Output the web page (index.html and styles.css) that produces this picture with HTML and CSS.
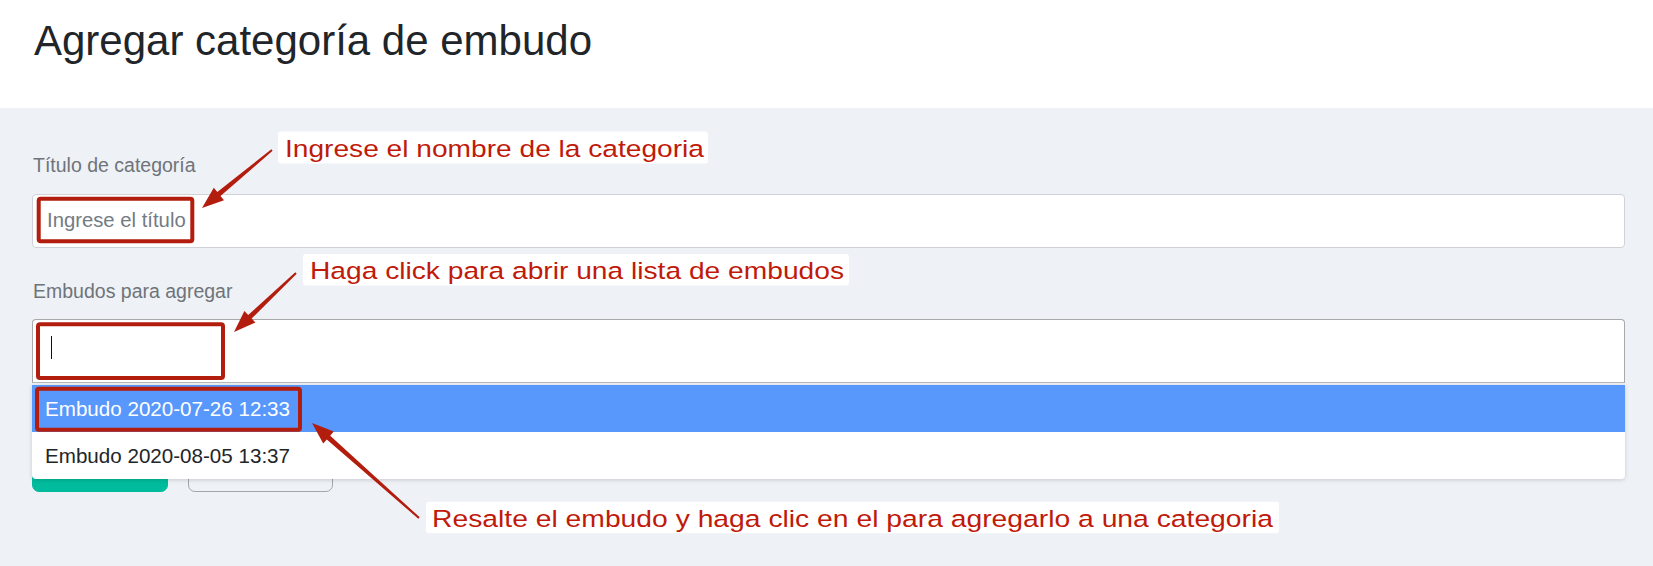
FILE: index.html
```html
<!DOCTYPE html>
<html lang="es">
<head>
<meta charset="utf-8">
<title>Agregar categoría de embudo</title>
<link rel="stylesheet" href="styles.css">
</head>
<body>
<header class="page-header">
  <h1 class="page-title">Agregar categoría de embudo</h1>
</header>
<main class="page-body">
  <form class="form">
    <div class="form-group">
      <label class="form-label">Título de categoría</label>
      <input class="form-input" type="text" placeholder="Ingrese el título">
    </div>
    <div class="form-group">
      <label class="form-label form-label-select">Embudos para agregar</label>
      <div class="select">
        <div class="select-box"><span class="select-caret"></span></div>
        <ul class="select-dropdown">
          <li class="select-option is-active">Embudo 2020-07-26 12:33</li>
          <li class="select-option">Embudo 2020-08-05 13:37</li>
        </ul>
      </div>
    </div>
    <div class="form-actions">
      <button type="button" class="btn btn-primary" aria-label="Guardar"></button>
      <button type="button" class="btn btn-outline" aria-label="Cancelar"></button>
    </div>
  </form>
</main>
<svg class="annotations" width="1653" height="566" viewBox="0 0 1653 566">
  <g class="mark-boxes" fill="none" stroke="#b31d0d" stroke-width="4">
    <rect x="38.7" y="198.7" width="153.6" height="42.6" rx="2"/>
    <rect x="38" y="324.3" width="185" height="53.7" rx="2"/>
    <rect x="37" y="388.7" width="263" height="41" rx="2"/>
  </g>
  <g class="arrows" fill="#b31d0d">
    <polygon points="272.6,150.8 220.5,195.9 224.0,200.2 202,208 213.8,187.8 217.3,192.1 271.4,149.2"/>
    <polygon points="296.7,273.7 251.6,318.6 255.4,322.6 234,332 244.4,311.0 248.2,315.0 295.3,272.3"/>
    <polygon points="418.3,518.7 326.8,439.5 323.2,443.6 312,423 333.8,431.6 330.2,435.7 419.7,517.3"/>
  </g>
  <g class="notes">
    <rect class="note-bg" x="278" y="131.5" width="430" height="32" rx="3"/>
    <text class="note-text" x="285" y="156.7" textLength="419" lengthAdjust="spacingAndGlyphs">Ingrese el nombre de la categoria</text>
    <rect class="note-bg" x="303" y="254" width="546" height="31.5" rx="3"/>
    <text class="note-text" x="310" y="279.3" textLength="534" lengthAdjust="spacingAndGlyphs">Haga click para abrir una lista de embudos</text>
    <rect class="note-bg" x="426" y="501.7" width="853" height="31.6" rx="3"/>
    <text class="note-text" x="432" y="526.7" textLength="841" lengthAdjust="spacingAndGlyphs">Resalte el embudo y haga clic en el para agregarlo a una categoria</text>
  </g>
</svg>
</body>
</html>
```
FILE: styles.css
```css
html {
  background: #eef1f6;
}

body {
  margin: 0;
  min-height: 566px;
  background: #eef1f6;
  font-family: "Liberation Sans", Arial, sans-serif;
  position: relative;
  overflow: hidden;
}

.page-header {
  background: #ffffff;
  height: 108px;
  box-sizing: border-box;
  padding: 16.5px 0 0 34px;
}

.page-title {
  margin: 0;
  font-size: 42px;
  line-height: 48px;
  font-weight: 400;
  color: #212529;
}

.page-body {
  padding: 45px 28px 0 32px;
}

.form {
  margin: 0;
}

.form-group {
  margin-bottom: 31px;
}

.form-group:last-of-type {
  margin-bottom: 0;
}

.form-label {
  display: block;
  font-size: 19.5px;
  line-height: 24px;
  color: #6f7479;
  margin: 0 0 16.5px 1px;
}

.form-label-select {
  margin-bottom: 16.8px;
}

.form-input {
  display: block;
  width: 100%;
  height: 54px;
  box-sizing: border-box;
  border: 1px solid #cfd2d6;
  border-radius: 4px;
  background: #ffffff;
  padding: 0 14px;
  font-family: "Liberation Sans", Arial, sans-serif;
  font-size: 20.3px;
  color: #333;
  outline: none;
}

.form-input::placeholder {
  color: #737b84;
  opacity: 1;
}

.select {
  position: relative;
}

.select-box {
  height: 64px;
  box-sizing: border-box;
  border: 1px solid #a9a9a9;
  border-bottom-color: #b8b8b8;
  border-radius: 4px 4px 0 0;
  background: #ffffff;
  padding: 16px 0 0 17.7px;
}

.select-caret {
  display: block;
  width: 1px;
  height: 23px;
  background: #111;
}

.select-dropdown {
  position: absolute;
  left: 0;
  right: 0;
  top: calc(100% + 1.6px);
  margin: 0;
  padding: 0;
  list-style: none;
  background: #ffffff;
  border-radius: 0 0 4px 4px;
  box-shadow: 0 1px 4px rgba(0, 0, 0, 0.16);
  z-index: 5;
  overflow: hidden;
}

.select-option {
  padding: 12px 13px;
  font-size: 20.6px;
  line-height: 23px;
  color: #222529;
}

.select-option.is-active {
  background: #5897fb;
  color: #ffffff;
}

.form-actions {
  display: flex;
  gap: 20px;
  margin-top: 62.7px;
}

.btn {
  height: 46px;
  border-radius: 7px;
  padding: 0;
  cursor: pointer;
}

.btn-primary {
  width: 136px;
  background: #00bc9c;
  border: 1px solid #00bc9c;
}

.btn-outline {
  width: 145px;
  background: transparent;
  border: 1px solid #a2a6ab;
}

.annotations {
  position: absolute;
  left: 0;
  top: 0;
  pointer-events: none;
  z-index: 10;
}

.note-bg {
  fill: #ffffff;
}

.note-text {
  font-family: "Liberation Sans", Arial, sans-serif;
  font-size: 24.5px;
  fill: #bf1a0a;
}
```
